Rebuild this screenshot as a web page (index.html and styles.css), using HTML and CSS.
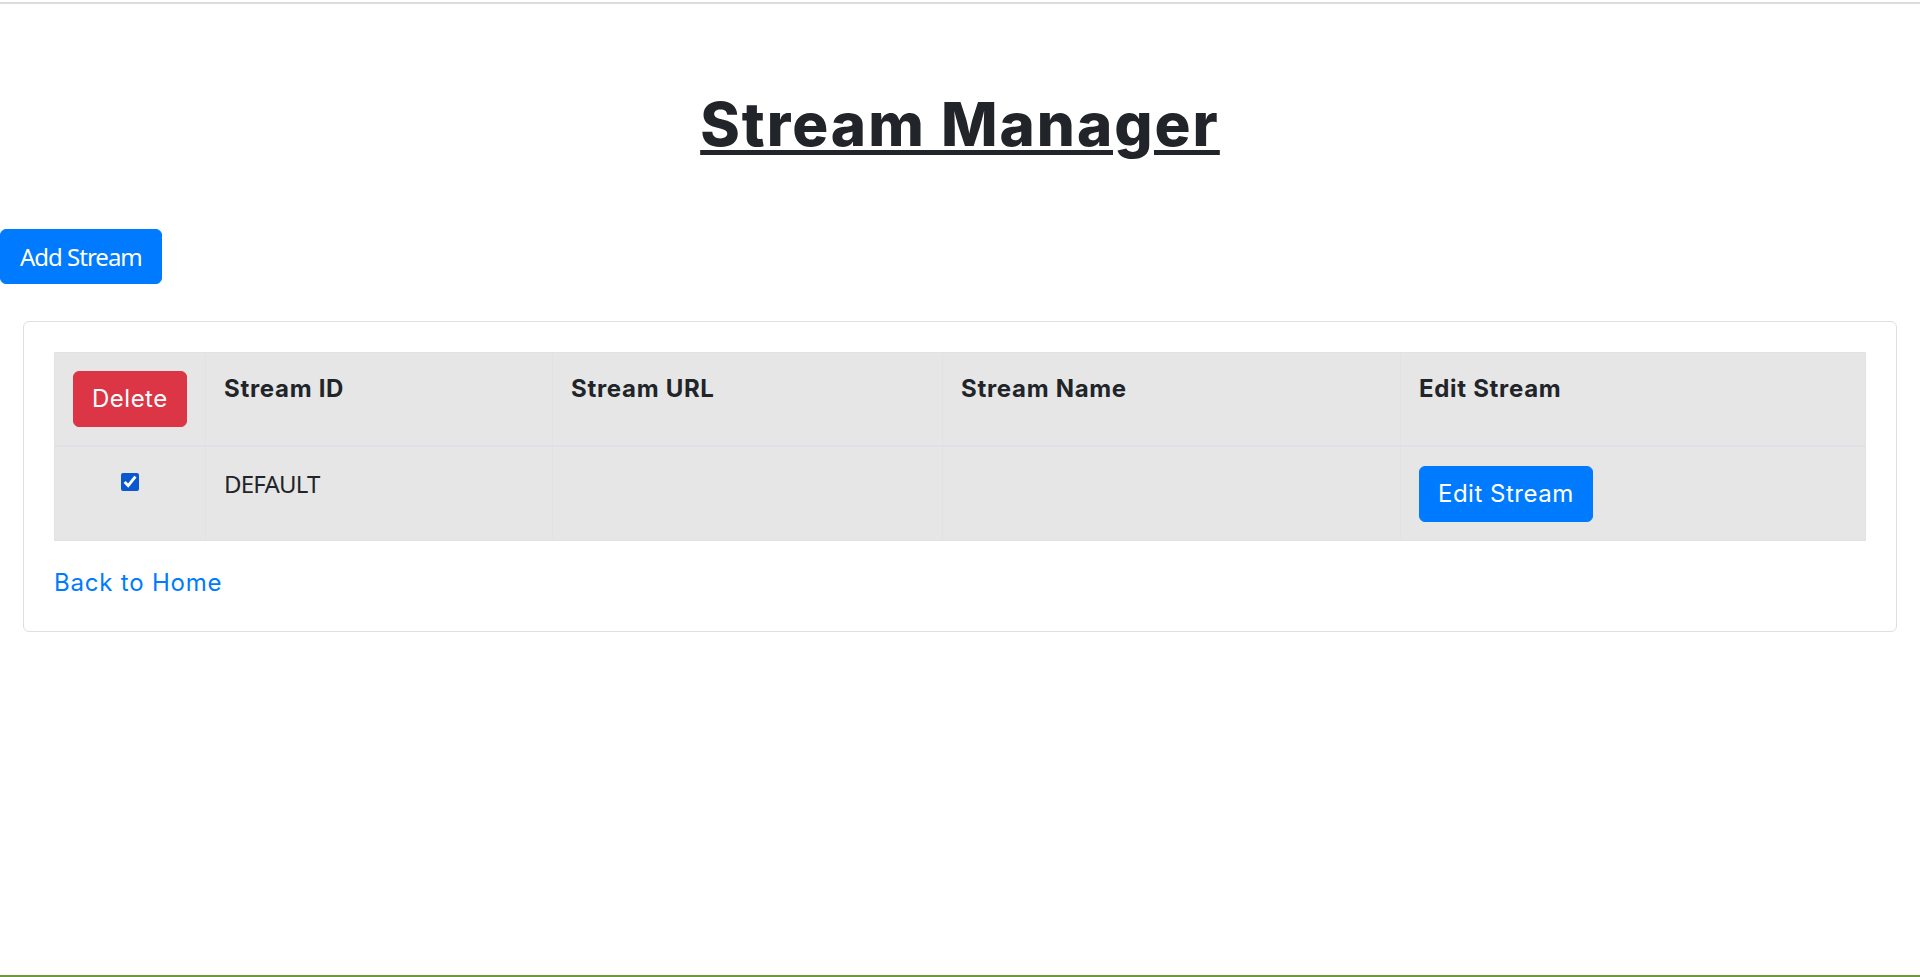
FILE: index.html
```html
<!DOCTYPE html>
<html lang="en">
<head>
<meta charset="utf-8">
<title>Stream Manager</title>
<link rel="stylesheet" href="styles.css">
</head>
<body>
<div class="topline"></div>
<h1 class="title">Stream Manager</h1>
<div class="actions">
  <button class="btn btn-primary btn-add" type="button">Add Stream</button>
</div>
<div class="container">
  <div class="card">
    <table class="streams">
      <colgroup>
        <col class="w-sel">
        <col class="w-id">
        <col class="w-url">
        <col class="w-name">
        <col class="w-edit">
      </colgroup>
      <thead>
        <tr>
          <th class="sel"><button class="btn btn-danger" type="button">Delete</button></th>
          <th>Stream ID</th>
          <th>Stream URL</th>
          <th>Stream Name</th>
          <th>Edit Stream</th>
        </tr>
      </thead>
      <tbody>
        <tr>
          <td class="sel"><input class="check" type="checkbox" checked></td>
          <td class="sys">DEFAULT</td>
          <td></td>
          <td></td>
          <td><button class="btn btn-primary" type="button">Edit Stream</button></td>
        </tr>
      </tbody>
    </table>
    <a class="back" href="#">Back to Home</a>
  </div>
</div>
<div class="bottomline"></div>
</body>
</html>
```
FILE: styles.css
```css
* { box-sizing: border-box; }

html, body { height: 100%; }

body {
  margin: 0;
  min-height: 100vh;
  display: flex;
  flex-direction: column;
  background: #fff;
  color: #212529;
  font-family: Inter, "Open Sans", sans-serif;
  font-size: 24px;
  line-height: 1.5;
  letter-spacing: 0.5px;
  overflow: hidden;
}

.topline {
  margin-top: 2px;
  height: 2px;
  background: #dcdcdc;
  flex: none;
}

.title {
  margin: 84px 0 69px;
  text-align: center;
  font-size: 60px;
  font-weight: 800;
  line-height: 72px;
  letter-spacing: 2px;
  color: #212529;
  text-decoration: underline;
  text-decoration-thickness: 5px;
  text-underline-offset: 4px;
}

.actions { display: flex; }

.btn {
  display: inline-block;
  vertical-align: top;
  border: 1px solid transparent;
  border-radius: 6px;
  padding: 9px 18px;
  font-family: Inter, "Open Sans", sans-serif;
  font-size: 24px;
  font-weight: 400;
  line-height: 36px;
  letter-spacing: 0.5px;
  color: #fff;
  cursor: pointer;
}

.btn-primary { background: #007bff; border-color: #007bff; }
.btn-danger { background: #dc3545; border-color: #dc3545; }

.btn-add {
  font-family: "Noto Sans", "Open Sans", sans-serif;
  letter-spacing: -1px;
  padding: 9px 19px;
  height: 55px;
  line-height: 35px;
}

.container {
  margin-top: 37px;
  padding: 0 23px;
}

.card {
  border: 1px solid #dfdfdf;
  border-radius: 6px;
  padding: 30px;
  background: #fff;
}

.streams {
  width: 100%;
  table-layout: fixed;
  border-collapse: collapse;
  background: #e6e6e6;
  margin-bottom: 24px;
}

.w-sel { width: 151px; }
.w-id { width: 347px; }
.w-url { width: 390px; }
.w-name { width: 458px; }

.streams th,
.streams td {
  border: 1px solid #e0e2e5;
  padding: 18px;
  vertical-align: top;
  text-align: left;
}

.streams td { padding-top: 19px; }

.streams th {
  font-weight: 700;
  border-bottom: 2px solid #dee2e6;
  letter-spacing: 0.7px;
}

.streams td.sel { text-align: center; }

.sys {
  font-family: "Noto Sans", "Open Sans", sans-serif;
  letter-spacing: -0.8px;
  color: #212529;
}

.check {
  width: 18px;
  height: 18px;
  margin: 7px 0 0;
  vertical-align: top;
  accent-color: #0b57d0;
}

.back {
  display: block;
  color: #007bff;
  text-decoration: none;
  letter-spacing: 0.8px;
  line-height: 36px;
}

.bottomline {
  margin-top: auto;
  height: 2px;
  background: #6b9a3b;
  flex: none;
}
```
